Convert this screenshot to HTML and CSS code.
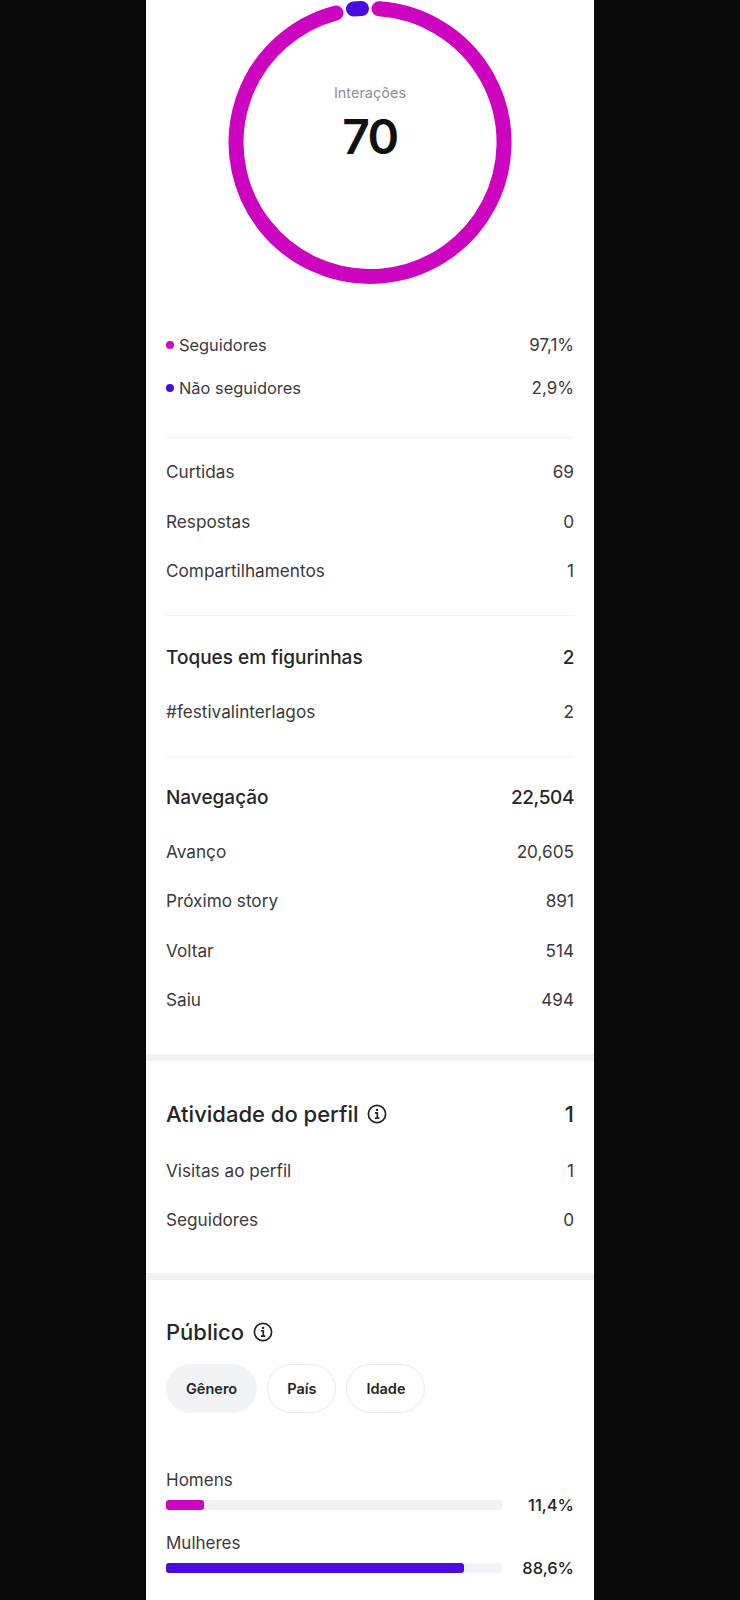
FILE: index.html
```html
<!DOCTYPE html>
<html lang="pt-BR">
<head>
<meta charset="utf-8">
<title>Insights</title>
<link rel="stylesheet" href="styles.css">
</head>
<body>
<main class="panel">
  <section class="block block-first">
    <div class="ring">
      <svg class="ring-svg" width="286" height="286" viewBox="0 0 286 286" aria-hidden="true">
        <path class="arc-pink" d="M152 8.8 A134 134 0 1 1 109 12.9"/>
        <path class="arc-blue" d="M126.5 9 L134.5 8.6"/>
      </svg>
      <div class="ring-label">
        <div class="ring-title">Interações</div>
        <div class="ring-value">70</div>
      </div>
    </div>
    <div class="legend">
      <div class="row legend-row"><span class="key"><i class="dot dot-pink"></i>Seguidores</span><span>97,1%</span></div>
      <div class="row legend-row"><span class="key"><i class="dot dot-blue"></i>Não seguidores</span><span>2,9%</span></div>
    </div>
  </section>
  <hr class="rule rule-a">
  <section class="list list-a">
    <div class="row"><span>Curtidas</span><span>69</span></div>
    <div class="row"><span>Respostas</span><span>0</span></div>
    <div class="row"><span>Compartilhamentos</span><span>1</span></div>
  </section>
  <hr class="rule rule-b">
  <section class="list list-b">
    <div class="row head"><span>Toques em figurinhas</span><span class="head-value">2</span></div>
    <div class="row"><span>#festivalinterlagos</span><span>2</span></div>
  </section>
  <hr class="rule rule-c">
  <section class="list list-c">
    <div class="row head"><span>Navegação</span><span class="head-value">22,504</span></div>
    <div class="row"><span>Avanço</span><span>20,605</span></div>
    <div class="row"><span>Próximo story</span><span>891</span></div>
    <div class="row"><span>Voltar</span><span>514</span></div>
    <div class="row"><span>Saiu</span><span>494</span></div>
  </section>
  <div class="band band-a"></div>
  <section class="list list-d">
    <div class="row head head-lg">
      <span class="title-icon">Atividade do perfil
        <svg class="info" width="20" height="20" viewBox="0 0 20 20" aria-hidden="true"><circle cx="10" cy="10" r="8.6"/><path d="M8 8.9h2.3v5M8 14.2h4.4"/><circle class="info-dot" cx="10" cy="5.9" r="1.2"/></svg>
      </span>
      <span>1</span>
    </div>
    <div class="row"><span>Visitas ao perfil</span><span>1</span></div>
    <div class="row"><span>Seguidores</span><span>0</span></div>
  </section>
  <div class="band band-b"></div>
  <section class="audience">
    <h2 class="title-icon audience-title">Público
      <svg class="info" width="20" height="20" viewBox="0 0 20 20" aria-hidden="true"><circle cx="10" cy="10" r="8.6"/><path d="M8 8.9h2.3v5M8 14.2h4.4"/><circle class="info-dot" cx="10" cy="5.9" r="1.2"/></svg>
    </h2>
    <div class="chips">
      <span class="chip chip-on">Gênero</span>
      <span class="chip">País</span>
      <span class="chip">Idade</span>
    </div>
    <div class="bars">
      <div class="bar-item">
        <div class="bar-name">Homens</div>
        <div class="bar-line">
          <div class="track"><div class="fill fill-pink" style="width:11.4%"></div></div>
          <span class="pct">11,4%</span>
        </div>
      </div>
      <div class="bar-item">
        <div class="bar-name">Mulheres</div>
        <div class="bar-line">
          <div class="track"><div class="fill fill-blue" style="width:88.6%"></div></div>
          <span class="pct">88,6%</span>
        </div>
      </div>
    </div>
  </section>
</main>
</body>
</html>
```
FILE: styles.css
```css
* { box-sizing: border-box; }
html, body { margin: 0; height: 1600px; overflow: hidden; background: #0a0a0a; }
body { font-family: Inter, "Noto Sans", "Liberation Sans", sans-serif; color: #3a3a3c; }
.panel { width: 448px; height: 1600px; margin: 0 auto; background: #fff; overflow: hidden; }

.block-first { padding: 0 20px; }
.ring { position: relative; width: 286px; height: 286px; margin: 0 auto; }
.ring-svg { display: block; fill: none; }
.arc-pink { stroke: #cc04c0; stroke-width: 15; stroke-linecap: round; fill: none; }
.arc-blue { stroke: #4a0bdc; stroke-width: 15; stroke-linecap: round; fill: none; }
.ring-label { position: absolute; left: 0; right: 0; top: 83px; text-align: center; }
.ring-title { font-size: 14.5px; line-height: 20px; color: #8e8e93; }
.ring-value { font-size: 48px; line-height: 60px; margin-top: 4px; font-weight: 600; letter-spacing: -1.5px; color: #111; }

.legend { margin-top: 37px; font-size: 16.4px; }
.row { display: flex; justify-content: space-between; align-items: center; height: 49.4px; font-size: 17.2px; }
.legend-row { height: 43.5px; font-size: 17px; }
.key { display: flex; align-items: center; font-size: 16.4px; }
.dot { width: 8px; height: 8px; border-radius: 50%; margin-right: 5px; }
.dot-pink { background: #cc04c0; }
.dot-blue { background: #4a0bdc; }

.rule { border: 0; height: 1px; margin: 0 20px; background: #f2f2f4; }
.rule-a { margin-top: 27px; }
.list { padding: 0 20px; }
.list-a { margin-top: 9px; }
.rule-b { margin-top: 20px; }
.list-b { margin-top: 12px; }
.rule-c { margin-top: 19px; }
.list-c { margin-top: 11px; }

.head { height: 59px; font-size: 19px; font-weight: 530; color: #262626; }
.head-value { letter-spacing: -0.4px; }
.band { height: 7px; background: #f2f2f6; }
.band-a { margin-top: 30px; }
.list-d { margin-top: 21.5px; }
.head-lg { font-size: 22px; height: 63px; font-weight: 500; }
.band-b { margin-top: 29px; }

.title-icon { display: flex; align-items: center; gap: 9px; }
.info { fill: none; stroke: #262626; stroke-width: 1.7; }
.info-dot { fill: #262626; stroke: none; }

.audience { padding: 0 20px; }
.audience-title { margin: 38px 0 0; font-size: 22px; line-height: 28px; font-weight: 500; color: #262626; }
.chips { display: flex; gap: 10px; margin-top: 17.6px; }
.chip { display: flex; align-items: center; height: 49px; padding: 0 19px; border: 1.5px solid #e9e9ec; border-radius: 25px; font-size: 14.5px; font-weight: 600; color: #262626; }
.chip-on { background: #f2f3f5; border-color: #f2f3f5; }

.bars { margin-top: 56px; }
.bar-item { margin-bottom: 15.4px; }
.bar-name { font-size: 17px; line-height: 22px; }
.bar-line { display: flex; align-items: center; justify-content: space-between; height: 24px; margin-top: 2px; }
.track { width: 336px; height: 10px; background: #f1f2f5; border-radius: 3px; }
.fill { height: 100%; border-radius: 3px; }
.fill-pink { background: #cc04c0; }
.fill-blue { background: #4a0bdc; }
.pct { font-size: 16.5px; font-weight: 500; color: #262626; }
```
